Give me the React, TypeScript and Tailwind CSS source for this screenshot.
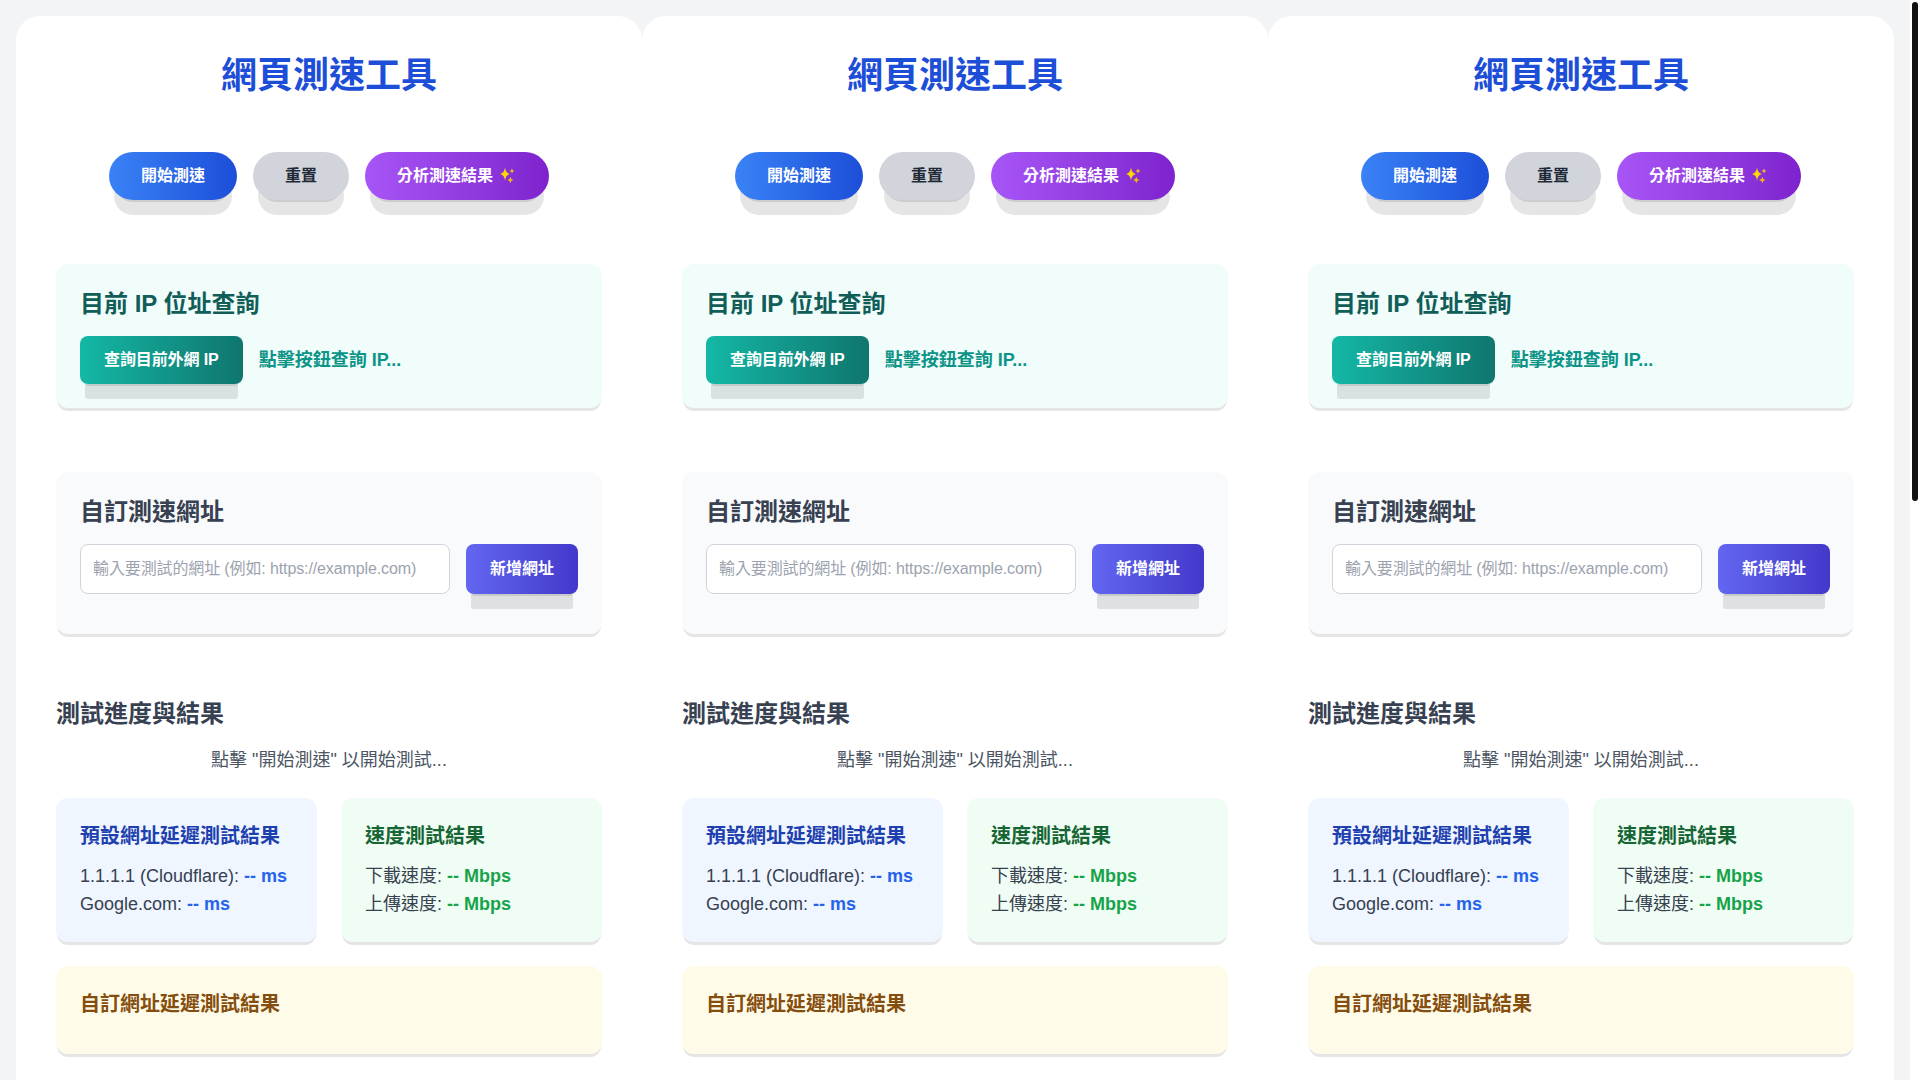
import { useState } from "react";

const font = "font-['Liberation_Sans','Noto_Sans_CJK_TC',sans-serif]";
const btnShadow = "shadow-[0_20px_0_-5px_rgba(0,0,0,0.1),0_8px_0_-6px_rgba(0,0,0,0.1)]";
const cardShadow = "shadow-[0_4px_0_-1px_rgba(0,0,0,0.1)]";

function Sparkles() {
  return (
    <svg viewBox="0 0 20 20" className="ml-1 h-5 w-5">
      <path d="M8 1.5Q8.7 7.2 13 8 8.7 8.8 8 14.5 7.3 8.8 3 8 7.3 7.2 8 1.5Z" fill="#ffd800" />
      <path d="M15 2.5Q15.3 4.7 17.5 5 15.3 5.3 15 7.5 14.7 5.3 12.5 5 14.7 4.7 15 2.5Z" fill="#f6c21c" />
      <path d="M13.3 10.8Q13.7 13.6 16.5 14 13.7 14.4 13.3 17.2 12.9 14.4 10.1 14 12.9 13.6 13.3 10.8Z" fill="#f2b612" />
    </svg>
  );
}

function SpeedTestCard() {
  const [url, setUrl] = useState("");

  return (
    <div className="w-[626px] min-h-[2287px] shrink-0 rounded-3xl bg-white px-10 pt-10">
      <h1 className="mb-14 text-center text-4xl font-bold text-[#1d4ed8]">網頁測速工具</h1>

      {/* Main actions */}
      <div className="mb-16 flex justify-center gap-4">
        <button className={`rounded-full bg-gradient-to-r from-[#3b82f6] to-[#1d4ed8] px-8 py-3 font-semibold text-white ${btnShadow}`}>
          開始測速
        </button>
        <button className={`rounded-full bg-[#d1d5db] px-8 py-3 font-semibold text-[#1f2937] ${btnShadow}`}>
          重置
        </button>
        <button className={`flex items-center rounded-full bg-gradient-to-r from-[#a855f7] to-[#7e22ce] px-8 py-3 font-semibold text-white ${btnShadow}`}>
          分析測速結果
          <Sparkles />
        </button>
      </div>

      {/* IP lookup */}
      <div className={`mb-16 rounded-xl bg-[#f0fdfa] p-6 ${cardShadow}`}>
        <h2 className="mb-4 text-2xl font-semibold text-[#115e59]">目前 IP 位址查詢</h2>
        <div className="flex items-center gap-4">
          <button className={`rounded-lg bg-gradient-to-r from-[#14b8a6] to-[#0f766e] px-6 py-3 font-semibold tracking-[-0.1px] text-white ${btnShadow}`}>
            查詢目前外網 IP
          </button>
          <span className="text-lg font-semibold text-[#0d9488]">點擊按鈕查詢 IP...</span>
        </div>
      </div>

      {/* Custom URL */}
      <div className={`mb-16 rounded-xl bg-[#f9fafb] p-6 pb-10 ${cardShadow}`}>
        <h2 className="mb-4 text-2xl font-semibold text-[#374151]">自訂測速網址</h2>
        <div className="flex gap-4">
          <input
            value={url}
            onChange={(e) => setUrl(e.target.value)}
            placeholder="輸入要測試的網址 (例如: https://example.com)"
            className="min-w-0 flex-1 rounded-lg border border-[#d1d5db] bg-white px-3 py-3 tracking-[-0.12px] text-[#374151] placeholder:text-[#9ca3af]"
          />
          <button className={`rounded-lg bg-gradient-to-r from-[#6366f1] to-[#4338ca] px-6 py-3 font-semibold text-white ${btnShadow}`}>
            新增網址
          </button>
        </div>
      </div>

      {/* Results */}
      <h2 className="mb-4 text-2xl font-semibold text-[#374151]">測試進度與結果</h2>
      <p className="mb-6 text-center text-lg text-[#4b5563]">點擊 "開始測速" 以開始測試...</p>

      <div className="mb-6 grid grid-cols-2 gap-6">
        <div className={`rounded-xl bg-[#eff6ff] p-6 ${cardShadow}`}>
          <h3 className="mb-3 text-xl font-semibold text-[#1e40af]">預設網址延遲測試結果</h3>
          <p className="text-lg text-[#374151]">
            1.1.1.1 (Cloudflare): <span className="font-bold text-[#2563eb]">-- ms</span>
          </p>
          <p className="text-lg text-[#374151]">
            Google.com: <span className="font-bold text-[#2563eb]">-- ms</span>
          </p>
        </div>
        <div className={`rounded-xl bg-[#f0fdf4] p-6 ${cardShadow}`}>
          <h3 className="mb-3 text-xl font-semibold text-[#166534]">速度測試結果</h3>
          <p className="text-lg text-[#374151]">
            下載速度: <span className="font-bold text-[#16a34a]">-- Mbps</span>
          </p>
          <p className="text-lg text-[#374151]">
            上傳速度: <span className="font-bold text-[#16a34a]">-- Mbps</span>
          </p>
        </div>
      </div>

      <div className={`rounded-xl bg-[#fefce8] p-6 pb-9 ${cardShadow}`}>
        <h3 className="text-xl font-semibold text-[#854d0e]">自訂網址延遲測試結果</h3>
      </div>
    </div>
  );
}

export default function App() {
  return (
    <div className={`${font} flex h-screen overflow-hidden bg-white`}>
      <div className="flex-1 overflow-hidden bg-[#f3f4f6] p-4">
        <div className="flex">
          <SpeedTestCard />
          <SpeedTestCard />
          <SpeedTestCard />
        </div>
      </div>
      {/* Scrollbar */}
      <div className="w-[10px] shrink-0 px-0.5 pt-0.5">
        <div className="h-[499px] rounded-[3px] bg-[#111111]" />
      </div>
    </div>
  );
}
